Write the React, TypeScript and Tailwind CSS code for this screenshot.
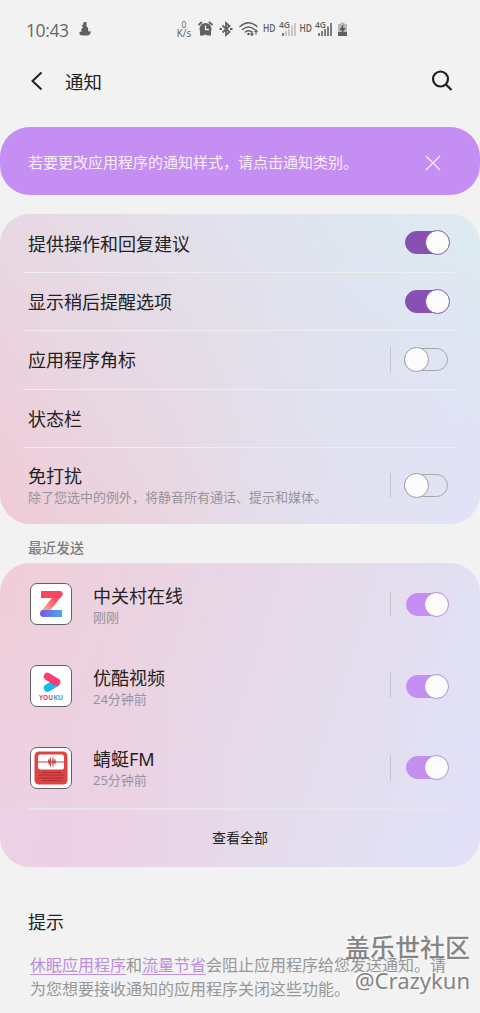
import React, { useState } from 'react';

const Switch = ({ checked, soft, onChange }: { checked: boolean; soft?: boolean; onChange: () => void }) => {
  const tone = soft ? 'bg-[#c58ef2] border-[#c58ef2]' : 'bg-[#8950b4] border-[#8950b4]';
  const knob = soft ? 'border-[#b98bd8]' : 'border-[#8159a5]';

  return (
    <button
      role="switch"
      aria-checked={checked}
      onClick={onChange}
      className={`flex items-center h-[23px] rounded-full border ${soft ? 'w-[42px]' : 'w-[44px]'} ${checked ? `justify-end ${tone}` : 'justify-start bg-transparent border-[#a6a6aa]'}`}
    >
      <span className={`w-[25px] h-[25px] shrink-0 rounded-full bg-[#fcfcfc] border ${checked ? `-mr-[1.5px] ${knob}` : '-ml-[1px] border-[#a0a0a2]'}`} />
    </button>
  );
};

const Divider = () => <span className="w-px h-[25px] bg-[#c3c3cc]" />;

const StatusIcons = () => (
  <svg width="176" height="24" viewBox="0 0 176 24" fill="none" stroke="#606060" className="font-['Open_Sans','Noto_Sans',sans-serif]">
    <g fill="#606060" stroke="none">
      <text x="8" y="7.5" fontSize="8.5" textAnchor="middle">0</text>
      <text x="8" y="17" fontSize="10" textAnchor="middle" textLength="14.5" lengthAdjust="spacingAndGlyphs">K/s</text>
      {/* alarm */}
      <circle cx="29.5" cy="9" r="6" />
      <path d="M24 11.500h4v4h-4zM31 11.500h4v4h-4z" />
    </g>
    <path d="M22.500 5 26 2M36.500 5 33 2" strokeWidth="2" />
    <path d="M29.500 5.500v4h3.500" stroke="#f2f2f2" strokeWidth="1.3" />
    {/* bluetooth */}
    <path d="M46.500 5.500 53.500 12 50 15V3L53.500 6 46.500 12.500" strokeWidth="1.800" />
    <path d="M43.500 9h2.500M54 9h2.500" strokeWidth="2" />
    {/* wifi */}
    <g strokeWidth="1.5" strokeLinecap="round">
      <path d="M64 6.500Q72.500 -1 81 6.500M66.500 9.500Q72.500 4.500 78.500 9.500M69.300 12Q72.500 9.500 75.700 12" />
    </g>
    <circle cx="72.500" cy="14" r="1.300" fill="#606060" stroke="none" />
    <path d="M76 11v4.500M74.500 13.500l1.500 2 1.500-2M80 14.500V10M78.500 12l1.500-2 1.500 2" strokeWidth="1.200" />
    <g fill="#606060" stroke="none" fontWeight="600">
      <text x="87" y="12" fontSize="10.500" textLength="12.500" lengthAdjust="spacingAndGlyphs">HD</text>
      <text x="103" y="7.500" fontSize="9.500" textLength="11" lengthAdjust="spacingAndGlyphs">4G</text>
      <text x="123.500" y="12" fontSize="10.500" textLength="12.500" lengthAdjust="spacingAndGlyphs">HD</text>
      <text x="139" y="7.500" fontSize="9.500" textLength="11" lengthAdjust="spacingAndGlyphs">4G</text>
    </g>
    <path d="M107 13v3M143 13v3M146 11v5M149 9v7M152 6.500v9.500M155 3v13" strokeWidth="1.600" />
    <path d="M110 11v5M113 9v7M116 5.500v10.500M119 3v13" stroke="#bdbdbd" strokeWidth="1.600" />
    {/* battery */}
    <path d="M162 4h2.500V2.500h4V4h2.500v12h-9z" fill="#b8b8b8" stroke="none" />
    <path d="M162 12h9v4h-9z" fill="#606060" stroke="none" />
    <path d="M167.500 4 163.500 10h2.500l-.5 4 4-6H167z" fill="#555" stroke="none" />
  </svg>
);

const ZolIcon = () => (
  <svg width="42" height="42" viewBox="0 0 42 42" className="shrink-0">
    <defs>
      <linearGradient id="zol" x1="0" y1="1" x2="1" y2="0">
        <stop offset="0" stopColor="#ffc59b" />
        <stop offset=".6" stopColor="#fb5268" />
      </linearGradient>
      <linearGradient id="zolBase" x1="0" x2="1">
        <stop offset="0" stopColor="#7659e0" />
        <stop offset="1" stopColor="#48a8f5" />
      </linearGradient>
    </defs>
    <path d="M11 28 22 15H11V8H29Q33 8 32.500 12L19 29Z" fill="url(#zol)" />
    <path d="M32 27V34H13.500a3.500 3.500 0 0 1 0-7z" fill="url(#zolBase)" />
    <path d="M11 8H29Q33 8 32.500 12L30 15H11Z" fill="#fa4561" />
  </svg>
);

const YoukuIcon = () => (
  <svg width="42" height="42" viewBox="0 0 42 42" className="shrink-0">
    <path d="M17.500 23 26 18" stroke="#14b9f6" strokeWidth="7.500" strokeLinecap="round" />
    <path d="M17.500 11.500 26.500 17" stroke="#fb3d72" strokeWidth="7.500" strokeLinecap="round" />
    <g fontFamily="Open Sans, sans-serif" fontSize="6.500" fontWeight="700">
      <text x="9" y="34.500" fill="#e3427c" textLength="14" lengthAdjust="spacingAndGlyphs">YOU</text>
      <text x="23.200" y="34.500" fill="#35a9e0" textLength="10" lengthAdjust="spacingAndGlyphs">KU</text>
    </g>
  </svg>
);

const RadioIcon = () => (
  <svg width="42" height="42" viewBox="0 0 42 42" className="shrink-0">
    <rect x="4.500" y="4.500" width="33" height="33" rx="4.500" fill="#dc4542" />
    <rect x="8" y="7.500" width="26" height="15" rx="2.500" fill="#fff" />
    <path d="M8 15H34" stroke="#bd4544" strokeWidth="1" />
    <path d="M18 14l1-3 1 4-1 4zM19.500 15l1-6 1 6-1 6zM22 15l1-6.500 1 6.500-1 6.500zM24 15l1-4 1 4-1 3z" fill="#bd4544" />
    <path d="M12 25.500H31M8.500 28H33.500M8.500 31H33.500M12 33.500H31" stroke="#aa2f33" strokeWidth="1" />
  </svg>
);

const options = [
  { id: 'suggest', title: '提供操作和回复建议', toggle: true, divider: false },
  { id: 'snooze', title: '显示稍后提醒选项', toggle: true, divider: false },
  { id: 'badge', title: '应用程序角标', toggle: true, divider: true },
  { id: 'statusbar', title: '状态栏', toggle: false, divider: false },
];

const apps = [
  { id: 'zol', name: '中关村在线', time: '刚刚', icon: <ZolIcon /> },
  { id: 'youku', name: '优酷视频', time: '24分钟前', icon: <YoukuIcon /> },
  { id: 'qingting', name: '蜻蜓FM', time: '25分钟前', icon: <RadioIcon /> },
];

const App = () => {
  const [enabled, setEnabled] = useState<Record<string, boolean>>({
    suggest: true,
    snooze: true,
    zol: true,
    youku: true,
    qingting: true,
  });
  const [showBanner, setShowBanner] = useState(true);

  const toggle = (id: string) => setEnabled((prev) => ({ ...prev, [id]: !prev[id] }));

  return (
    <div lang="zh-CN" className="relative w-[480px] h-[1013px] overflow-hidden bg-[#f2f2f2] text-[#222] font-['Noto_Sans','Noto_Sans_CJK_SC',sans-serif]">
      <div className="flex items-center h-[58px] pl-[26px]">
        <span className="w-[53px] pt-0.5 text-[17.5px] text-[#666] font-['Open_Sans',sans-serif] tracking-[-0.4px]">10:43</span>
        <svg width="12" height="14" viewBox="0 0 12 14" fill="#606060">
          <path d="M4 1l1.500-1h2v4.500Q10 5.500 9 8L10 10l1.500-1.500Q12.500 14 7 13.500H3Q-.5 13 .5 10.500 1 9 3 9.500L2 8l2-3-1.500-1.500 2-1z" />
        </svg>
        <div className="ml-[85px] pt-[6px]">
          <StatusIcons />
        </div>
      </div>

      <header className="flex items-center h-[69px] pl-[30px] pr-[26px] pb-[23px]">
        <svg width="14" height="20" viewBox="0 0 14 20" fill="none" stroke="#1f1f1f" strokeWidth="2">
          <path d="M11.500 1.500 2.500 10l9 8.500" />
        </svg>
        <h1 className="ml-[21px] pt-px text-[18.5px] leading-6">通知</h1>
        <svg className="ml-auto" width="24" height="24" viewBox="0 0 24 24" fill="none" stroke="#1f1f1f" strokeWidth="2.200">
          <circle cx="10.500" cy="10" r="7.500" />
          <path d="m16 15.500 5.500 5.500" />
        </svg>
      </header>

      {showBanner && (
        <div className="flex items-center justify-between h-[68px] mb-[19px] pl-7 pr-[39px] rounded-[30px] bg-[#c58ef2] text-[#fbeffc]">
          <p className="pt-px text-[15px] leading-5">若要更改应用程序的通知样式，请点击通知类别。</p>
          <button onClick={() => setShowBanner(false)} className="mt-1">
            <svg width="16" height="16" viewBox="0 0 16 16" stroke="currentColor" strokeWidth="1.200">
              <path d="m1 1 14 14M15 1 1 15" />
            </svg>
          </button>
        </div>
      )}

      <section className="h-[310px] rounded-[30px] bg-[radial-gradient(circle_at_100%_100%,#e1e2f6_0%,#e1e2f600_55%),linear-gradient(57deg,#efcbd6_0%,#e8d7e2_28%,#e3dfe9_52%,#dfe5f0_75%,#dcecf1_100%)]">
        {options.map((item, i) => (
          <div key={item.id} className="px-[23px]">
            <div className={`flex items-center pl-[5px] pr-[7px] border-b border-[#f0edf1] ${i === 0 ? 'h-[59px]' : 'h-[58.300px]'}`}>
              <p className={`flex-1 text-[18px] leading-6 ${item.divider ? '' : 'pt-px'}`}>{item.title}</p>
              {item.divider && (
                <div className="mr-[13px] flex">
                  <Divider />
                </div>
              )}
              {item.toggle && (
                <div className={item.divider ? 'mr-[2px] pb-px' : 'mr-px pb-px'}>
                  <Switch checked={!!enabled[item.id]} onChange={() => toggle(item.id)} />
                </div>
              )}
            </div>
          </div>
        ))}
        <div className="flex items-center h-[75px] pl-7 pr-8">
          <div className="flex-1">
            <p className="text-[18px] leading-6">免打扰</p>
            <p className="text-[13px] leading-[18px] text-[#98939a]">除了您选中的例外，将静音所有通话、提示和媒体。</p>
          </div>
          <div className="mr-[13px] flex">
            <Divider />
          </div>
          <Switch checked={!!enabled.dnd} onChange={() => toggle('dnd')} />
        </div>
      </section>

      <h2 className="h-[39px] pl-7 pt-[14px] text-[14px] leading-5 font-medium text-[#7d7d7d]">最近发送</h2>

      <section className="h-[304px] rounded-[30px] bg-[radial-gradient(circle_at_0%_100%,#ecd0e5_0%,#ecd0e500_45%),linear-gradient(108deg,#f0cdd7_0%,#ead4e3_32%,#e5dbea_58%,#e2e0f4_84%,#e2e0f8_100%)]">
        {apps.map((app) => (
          <div key={app.id} className="flex items-center h-[81.700px] pl-[30px] pr-8">
            <div className="flex items-center justify-center w-[42px] h-[42px] mt-px rounded-[7px] border border-[#66606a] bg-white">{app.icon}</div>
            <div className="flex-1 ml-[21px] pt-0.5">
              <p className="pt-px text-[18px] leading-6">{app.name}</p>
              <p className="-mt-px text-[13px] leading-5 text-[#98939a]">{app.time}</p>
            </div>
            <div className="mr-[15px] flex">
              <Divider />
            </div>
            <div className="pt-px">
              <Switch soft checked={!!enabled[app.id]} onChange={() => toggle(app.id)} />
            </div>
          </div>
        ))}
        <div className="mx-7 h-0.5 bg-[#e9e3ec]" />
        <button className="block w-full h-[54px] text-[14px]">查看全部</button>
      </section>

      <section className="pt-[43px] pl-7">
        <h3 className="text-[18px] leading-6">提示</h3>
        <p className="mt-[19px] ml-0.5 w-[424px] text-[16px] leading-6 text-[#979797]">
          <a className="text-[#bd8ede] underline underline-offset-[3px]">休眠应用程序</a>和
          <a className="text-[#bd8ede] underline underline-offset-[3px]">流量节省</a>会阻止应用程序给您发送通知。请为您想要接收通知的应用程序关闭这些功能。
        </p>
      </section>

      {/* community signature over the page */}
      <div className="absolute right-[10px] top-[931px] text-right text-[25px] leading-[33px] text-[#858585] [text-shadow:-1px_-1px_0_#fafafa,-2px_-1px_1px_#fff]">
        <p className="font-medium">盖乐世社区</p>
        <p className="text-[22px]">@Crazykun</p>
      </div>
    </div>
  );
};

export default App;
